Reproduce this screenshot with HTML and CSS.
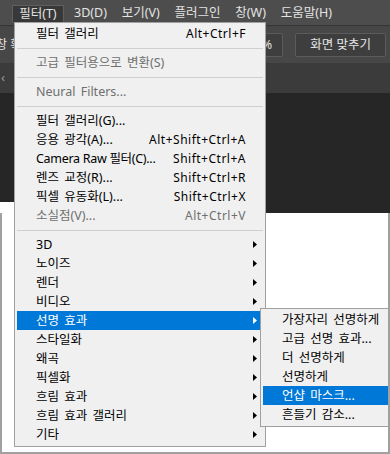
FILE: index.html
```html
<!DOCTYPE html>
<html lang="ko">
<head>
<meta charset="utf-8">
<title>필터 메뉴</title>
<link rel="stylesheet" href="styles.css">
</head>
<body>
<div class="frame">
  <div class="menubar">
    <span class="mb-item mb-first">선택(S)</span>
    <span class="mb-item mb-open">필터(T)</span>
    <span class="mb-item">3D(D)</span>
    <span class="mb-item">보기(V)</span>
    <span class="mb-item">플러그인</span>
    <span class="mb-item">창(W)</span>
    <span class="mb-item">도움말(H)</span>
  </div>
  <div class="optbar">
    <span class="opt-label">창 확대</span>
    <span class="opt-btn opt-zoom">100%</span>
    <span class="opt-btn">화면 맞추기</span>
  </div>
  <div class="tabbar"><span class="tab-arrow">‹</span></div>
  <div class="canvas"><div class="canvas-left"></div><div class="canvas-right"></div></div>
  <div class="paper"></div>

  <div class="menu">
    <div class="item"><span class="label">필터 갤러리</span><span class="key">Alt+Ctrl+F</span></div>
    <div class="sep"></div>
    <div class="item off"><span class="label">고급 필터용으로 변환(S)</span></div>
    <div class="sep"></div>
    <div class="item off"><span class="label">Neural Filters...</span></div>
    <div class="sep"></div>
    <div class="item"><span class="label">필터 갤러리(G)...</span></div>
    <div class="item"><span class="label">응용 광각(A)...</span><span class="key">Alt+Shift+Ctrl+A</span></div>
    <div class="item"><span class="label latin">Camera Raw 필터(C)...</span><span class="key">Shift+Ctrl+A</span></div>
    <div class="item"><span class="label">렌즈 교정(R)...</span><span class="key">Shift+Ctrl+R</span></div>
    <div class="item"><span class="label">픽셀 유동화(L)...</span><span class="key">Shift+Ctrl+X</span></div>
    <div class="item off"><span class="label">소실점(V)...</span><span class="key">Alt+Ctrl+V</span></div>
    <div class="sep"></div>
    <div class="item sub"><span class="label">3D</span><svg class="arrow" width="4" height="7" viewBox="0 0 4 7"><polygon points="0,0 4,3.5 0,7"/></svg></div>
    <div class="item sub"><span class="label">노이즈</span><svg class="arrow" width="4" height="7" viewBox="0 0 4 7"><polygon points="0,0 4,3.5 0,7"/></svg></div>
    <div class="item sub"><span class="label">렌더</span><svg class="arrow" width="4" height="7" viewBox="0 0 4 7"><polygon points="0,0 4,3.5 0,7"/></svg></div>
    <div class="item sub"><span class="label">비디오</span><svg class="arrow" width="4" height="7" viewBox="0 0 4 7"><polygon points="0,0 4,3.5 0,7"/></svg></div>
    <div class="item sub active"><span class="label">선명 효과</span><svg class="arrow" width="4" height="7" viewBox="0 0 4 7"><polygon points="0,0 4,3.5 0,7"/></svg></div>
    <div class="item sub"><span class="label">스타일화</span><svg class="arrow" width="4" height="7" viewBox="0 0 4 7"><polygon points="0,0 4,3.5 0,7"/></svg></div>
    <div class="item sub"><span class="label">왜곡</span><svg class="arrow" width="4" height="7" viewBox="0 0 4 7"><polygon points="0,0 4,3.5 0,7"/></svg></div>
    <div class="item sub"><span class="label">픽셀화</span><svg class="arrow" width="4" height="7" viewBox="0 0 4 7"><polygon points="0,0 4,3.5 0,7"/></svg></div>
    <div class="item sub"><span class="label">흐림 효과</span><svg class="arrow" width="4" height="7" viewBox="0 0 4 7"><polygon points="0,0 4,3.5 0,7"/></svg></div>
    <div class="item sub"><span class="label">흐림 효과 갤러리</span><svg class="arrow" width="4" height="7" viewBox="0 0 4 7"><polygon points="0,0 4,3.5 0,7"/></svg></div>
    <div class="item sub"><span class="label">기타</span><svg class="arrow" width="4" height="7" viewBox="0 0 4 7"><polygon points="0,0 4,3.5 0,7"/></svg></div>
  </div>

  <div class="submenu">
    <div class="item"><span class="label">가장자리 선명하게</span></div>
    <div class="item"><span class="label">고급 선명 효과...</span></div>
    <div class="item"><span class="label">더 선명하게</span></div>
    <div class="item"><span class="label">선명하게</span></div>
    <div class="item active"><span class="label">언샵 마스크...</span></div>
    <div class="item"><span class="label">흔들기 감소...</span></div>
  </div>
</div>
</body>
</html>
```

FILE: styles.css
```css
* { box-sizing: border-box; }
html, body { margin: 0; padding: 0; background: #fff; }
body {
  font-family: "Noto Sans", "Noto Sans CJK KR", sans-serif;
  font-size: 12px;
}
.frame {
  position: relative;
  width: 390px;
  height: 454px;
  overflow: hidden;
  display: flex;
  flex-direction: column;
}

/* menubar */
.menubar {
  height: 26px;
  flex: none;
  background: #4d4d4d;
  border-bottom: 1px solid #353535;
  display: flex;
  align-items: flex-start;
  padding-top: 5px;
  white-space: nowrap;
  color: #e3e3e3;
  font-size: 12.5px;
}
.mb-item {
  height: 17px;
  line-height: 16px;
  padding: 0 7.4px;
}
.mb-first { margin-left: -45px; margin-right: 5px; }
.mb-open {
  background: #383838;
  border: 1px solid #5f5f5f;
  border-bottom: none;
  padding: 0 6px 0 6px;
  margin-right: 3px;
}

/* options bar */
.optbar {
  height: 37px;
  flex: none;
  background: #474747;
  display: flex;
  align-items: flex-start;
  padding: 7px 4px 0 0;
  gap: 12px;
  white-space: nowrap;
  color: #e3e3e3;
}
.opt-label {
  width: 14px;
  overflow: hidden;
  text-indent: -4px;
  line-height: 24px;
  color: #e6e6e6;
}
.opt-btn {
  height: 24px;
  line-height: 22px;
  padding: 0 14px;
  border: 1px solid #5b5b5b;
  border-radius: 2px;
  background: #3e3e3e;
  color: #e3e3e3;
  font-size: 12.5px;
}
.opt-zoom { margin-left: auto; padding: 0 10px 0 40px; }

.tabbar {
  height: 30px;
  flex: none;
  background: #3b3b3b;
  padding: 6px 0 0 1px;
}
.tab-arrow {
  color: #9a9a9a;
  font-size: 13px;
  line-height: 16px;
}

.canvas {
  height: 120px;
  flex: none;
  display: flex;
  align-items: flex-start;
  background: #fff;
}
.canvas-left { width: 14px; height: 109px; background: #262626; }
.canvas-right { flex: 1; height: 120px; background: #262626; }

.paper {
  flex: 1;
  background: #fff;
  border: 2px solid #a0a0a0;
  border-top: none;
}

/* dropdown menu */
.menu, .submenu {
  position: absolute;
  background: #f0f0f0;
  border: 1px solid #a0a0a0;
  color: #000;
}
.menu {
  left: 14px;
  top: 22px;
  width: 252px;
  padding: 1px 2px 2px;
}
.submenu {
  left: 260px;
  top: 308px;
  width: 130px;
  padding: 1px 0 2px 2px;
  border-right: 2px solid #a0a0a0;
}
.item {
  height: 19px;
  display: flex;
  align-items: center;
  padding: 0 17px 0 19px;
  white-space: nowrap;
  line-height: 19px;
}
.item .label {
  flex: 1;
  font-size: 12.5px;
  word-spacing: 2px;
}
.item .label.latin { word-spacing: 0; letter-spacing: -0.3px; }
.item .key { letter-spacing: 0.5px; }
.item.off { color: #6f6f6f; }
.item.sub { padding-right: 6px; }
.arrow { fill: #000; flex: none; }
.item.active { background: #0078d7; color: #fff; }
.item.active .arrow { fill: #fff; }
.sep {
  height: 1px;
  background: #cfcfcf;
  margin: 5px 0 4px;
}
```
